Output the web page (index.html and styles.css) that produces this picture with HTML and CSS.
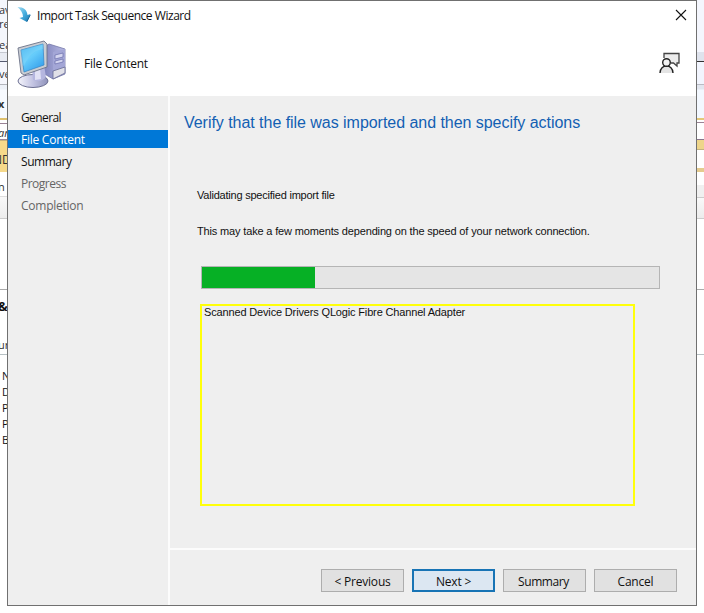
FILE: index.html
```
<!DOCTYPE html>
<html lang="en">
<head>
<meta charset="utf-8">
<title>Import Task Sequence Wizard</title>
<link rel="stylesheet" href="styles.css">
</head>
<body>
<div class="desktop">
  <div class="strip left">
    <div class="ribbon"><span class="r1">av</span><span class="r2">re</span><span class="r3">ea</span></div>
    <div class="gap"></div>
    <div class="path">ve</div>
    <div class="tab">x</div>
    <div class="search">ar</div>
    <div class="gold">ND</div>
    <div class="row">n</div>
    <div class="head"></div>
    <div class="blank"></div>
    <div class="group"><b>&amp;</b><span>ur</span></div>
    <div class="details"><span>N</span><span>D</span><span>P</span><span>P</span><span>B</span></div>
  </div>
  <main class="dialog">
    <header class="top">
      <div class="titlebar">
        <svg class="arrow" width="16" height="18" viewBox="0 0 16 18"><defs><linearGradient id="ag" x2="1" y2="1"><stop stop-color="#a5dcf2"/><stop offset=".5" stop-color="#45aede"/><stop offset="1" stop-color="#1672ad"/></linearGradient></defs><path d="M1.500 1C8 1 11 4 11.500 9L14.500 8L11 16L3.500 12L7 11C7 7 5 4 1.500 1Z" fill="url(#ag)"/><path d="M11 15.500L14.200 9" stroke="#1b6799" fill="none"/></svg>
        <span class="title">Import Task Sequence Wizard</span>
        <svg class="close" width="12" height="12" viewBox="0 0 12 12"><path d="M1 1L11 11M11 1L1 11" stroke="#111" stroke-width="1.100"/></svg>
      </div>
      <div class="banner">
        <svg class="computer" width="50" height="50" viewBox="0 0 50 50">
          <defs>
            <linearGradient id="screen" x2=".7" y2="1"><stop stop-color="#35a9ec"/><stop offset=".5" stop-color="#67cdfb"/><stop offset="1" stop-color="#36a1ed"/></linearGradient>
            <linearGradient id="tower" x2="1"><stop stop-color="#7e82ba"/><stop offset="1" stop-color="#b9bbe4"/></linearGradient>
            <linearGradient id="base"><stop stop-color="#f5f5fb"/><stop offset=".5" stop-color="#c2c3e2"/><stop offset="1" stop-color="#9093bb"/></linearGradient>
          </defs>
          <path d="M26 8L32 4L48 9V34L36 39L26 33Z" fill="url(#tower)" stroke="#7377a8" stroke-width=".8"/>
          <path d="M36 12L48 9V33L36 38Z" fill="#a3a6d6"/>
          <path d="M38 15L46 13V17L38 19ZM38 21L46 19V22L38 24Z" fill="#d4d5f0" stroke="#686dab" stroke-width=".7"/>
          <path d="M36 31L48 27V33L36 39Z" fill="#e0e0e8" stroke="#666a94" stroke-width=".8"/>
          <ellipse cx="16" cy="41" rx="15" ry="6.500" fill="url(#base)" stroke="#6b6e91"/>
          <path d="M15 28L27 25L29 37Q24 43 16 40Z" fill="#b5b6df"/>
          <path d="M18 29L23 27L24 39L18 40Z" fill="#e1e1f5"/>
          <path d="M1 8L27 1L30 4V27L7 35L4 33Z" fill="#c9cdd3" stroke="#6c7389" stroke-width=".9"/>
          <path d="M4 10L26 4L27 25L7 32Z" fill="url(#screen)" stroke="#3283c3" stroke-width=".7"/>
          <path d="M4 10L26 4V9Q13 11 7 26L5 25Z" fill="#8bdafa" opacity=".35"/>
        </svg>
        <span class="page">File Content</span>
        <svg class="feedback" width="22" height="22" viewBox="0 0 22 22"><path d="M5 6V1.500H20V11H18V14L14.500 11H12" fill="#ececec" stroke="#444" stroke-width="1.300"/><path d="M1 21C1 11 14 11 14 21Z" fill="#e4e4e4"/><path d="M1 21C1 11.500 14 11.500 14 21" fill="none" stroke="#222" stroke-width="1.400"/><circle cx="7.500" cy="10.500" r="3.800" fill="#f3f3f3" stroke="#222" stroke-width="1.400"/></svg>
      </div>
    </header>
    <div class="body">
      <nav class="steps">
        <span class="s1">General</span>
        <span class="s2 active">File Content</span>
        <span class="s3">Summary</span>
        <span class="s4 dim">Progress</span>
        <span class="s5 dim">Completion</span>
      </nav>
      <section class="main">
        <div class="content">
          <h1><span>Verify that the file was imported and then specify actions</span></h1>
          <p class="p1"><span>Validating specified import file</span></p>
          <p class="p2"><span>This may take a few moments depending on the speed of your network connection.</span></p>
          <div class="progress"><div class="fill"></div></div>
          <div class="log"><span>Scanned Device Drivers QLogic Fibre Channel Adapter</span></div>
        </div>
        <footer>
          <button><span class="b1">&lt; Previous</span></button>
          <button class="default"><span class="b2">Next &gt;</span></button>
          <button><span class="b3">Summary</span></button>
          <button><span class="b4">Cancel</span></button>
        </footer>
      </section>
    </div>
  </main>
  <div class="strip right">
    <div class="r-ribbon"></div>
    <div class="r-gap"></div>
    <div class="r-path"></div>
    <div class="r-tab"></div>
    <div class="r-search"></div>
    <div class="r-gold"></div>
    <div class="r-row"></div>
    <div class="r-rule"></div>
    <div class="r-light"></div>
    <div class="r-head"></div>
    <div class="r-blank"></div>
    <div class="r-group"></div>
  </div>
</div>
</body>
</html>
```
FILE: styles.css
```
* { box-sizing: border-box; }
body { margin: 0; background: #fff; font: 12px/16px "Open Sans", "Noto Sans", sans-serif; color: #111; }
.desktop { display: flex; width: 704px; height: 613px; overflow: hidden; }
.strip { width: 7px; flex: none; overflow: hidden; display: flex; flex-direction: column; font-size: 11px; color: #333; }
.strip > div { flex: none; overflow: hidden; white-space: nowrap; }
.strip span, .strip b { display: block; }
.ribbon { height: 53px; background: #f4f6fb; border-bottom: 1px solid #c5c8d0; padding-top: 2px; }
.r2 { margin-top: -2px; }
.r3 { margin-top: 5px; }
.ribbon span { margin-left: -1px; }
.gap { height: 8px; background: #e8ebf2; }
.path { height: 24px; border-top: 1px solid #555a70; border-bottom: 1px solid #b3b5bc; background: #f5f6fc; line-height: 23px; text-indent: -1px; }
.tab { height: 33px; background: linear-gradient(#edf1f8 4px, #f7faff 5px); font-weight: bold; line-height: 37px; text-indent: -2px; }
.search { height: 22px; border-top: 2px solid #dfc16f; border-bottom: 1px solid #99869b; background: #fff; font-style: italic; line-height: 25px; text-indent: -2px; box-shadow: inset 0 3px #fff, inset 0 4px #9a8395; }
.gold { height: 32px; background: #f6d98a; border-top: 1px solid #c9b279; line-height: 37px; font-size: 12px; text-indent: -7px; }
.row { height: 25px; border-bottom: 1px solid #dedede; line-height: 29px; text-indent: -2px; }
.head { height: 22px; background: linear-gradient(#f9f9f9, #ededed); border-bottom: 1px solid #ccc; }
.blank { height: 71px; border-bottom: 1px solid #aaa; }
.group { height: 65px; border-bottom: 1px solid #b7c1c4; }
.group b { margin-top: 8px; font-size: 13px; margin-left: -2px; color: #111; }
.group span { margin-top: 23px; margin-left: -2px; }
.details { padding: 13px 0 0 2px; color: #111; }
.dialog { flex: none; width: 690px; height: 606px; border: 1px solid #707070; display: flex; flex-direction: column; background: #efefef; }
.top { height: 95px; background: #fff; }
.titlebar { height: 30px; display: flex; align-items: center; padding: 0 9px 2px 8px; }
.title { margin-left: 5px; flex: 1; padding-top: 2px; letter-spacing: -.46px; }
.banner { height: 65px; display: flex; align-items: flex-start; padding: 9px 16px 0 9px; }
.page { margin: 16px 0 0 17px; flex: 1; letter-spacing: -.26px; }
.feedback { margin: 12px -1px 0 0; }
.body { flex: 1; display: flex; min-height: 0; }
.steps { width: 160px; padding-top: 12px; }
.steps span { display: block; height: 18px; line-height: 20px; margin-bottom: 4px; padding-left: 13px; letter-spacing: -.25px; }
.steps .s1 { letter-spacing: -.6px; }
.steps .s3 { letter-spacing: -.45px; }
.steps .active { background: #0078d7; color: #fff; }
.steps .dim { color: #656565; }
.steps .s4 { letter-spacing: -.5px; }
.main { flex: 1; border-left: 2px solid #fcfcfc; display: flex; flex-direction: column; }
.content { height: 452px; padding: 15px 14px 0; font-family: "Liberation Sans", sans-serif; white-space: nowrap; }
h1 { margin: 0; font-size: 16px; line-height: 24px; font-weight: 400; letter-spacing: -.04px; color: #135fb3; }
p { margin: 0; font-size: 11px; line-height: 16px; padding-left: 13px; }
.p1 { margin-top: 52px; letter-spacing: -.22px; }
.p2 { margin-top: 20px; letter-spacing: -.155px; }
.progress { width: 459px; height: 23px; margin: 27px 0 0 17px; border: 1px solid #b5b5b5; background: #e5e5e5; }
.fill { width: 113px; height: 21px; background: #06b025; }
.log { width: 435px; height: 202px; margin: 15px 0 0 16px; border: 2px solid #ffff0a; padding-left: 2px; font-size: 11px; line-height: 13px; letter-spacing: -.155px; }
footer { flex: 1; border-top: 2px solid #fcfcfc; padding: 19px 19px 0 0; display: flex; justify-content: flex-end; align-items: flex-start; gap: 8px; }
button { width: 83px; height: 23px; padding: 2px 0 0; border: 1px solid #adadad; background: #e1e1e1; font: inherit; line-height: 19px; letter-spacing: -.2px; color: #111; }
.b3 { margin-right: 2px; letter-spacing: -.4px; }
.default { border: 2px solid #1874b5; background: #dce7f2; line-height: 17px; }
.r-ribbon { height: 52px; background: #f4f6fd; }
.r-gap { height: 10px; background: #dfe3ed; border-bottom: 1px solid #333; }
.r-path { height: 23px; background: #f2f5fe; border-bottom: 1px solid #b9bbc4; }
.r-tab { height: 33px; background: linear-gradient(#e2e6ef 4px, #f3f8ff 5px); }
.r-search { height: 22px; background: #fff; border-top: 2px solid #e4c878; border-bottom: 1px solid #88758c; box-shadow: inset 0 2px #fff, inset 0 3px #9a8395; }
.r-gold { height: 10px; background: #eed58a; border-bottom: 1px solid #c5b27e; }
.r-row { height: 18px; background: #fff; }
.r-rule { height: 4px; background: #e5cb8e; }
.r-light { height: 26px; background: linear-gradient(#fff 13px, #f0f0f0 13px); border-bottom: 1px solid #ccc; }
.r-head { height: 21px; background: linear-gradient(#f9f9f9, #ececec); border-bottom: 1px solid #ccc; }
.r-blank { height: 71px; border-bottom: 1px solid #aaa; }
.r-group { height: 65px; border-bottom: 1px solid #b7c1c4; }
```
